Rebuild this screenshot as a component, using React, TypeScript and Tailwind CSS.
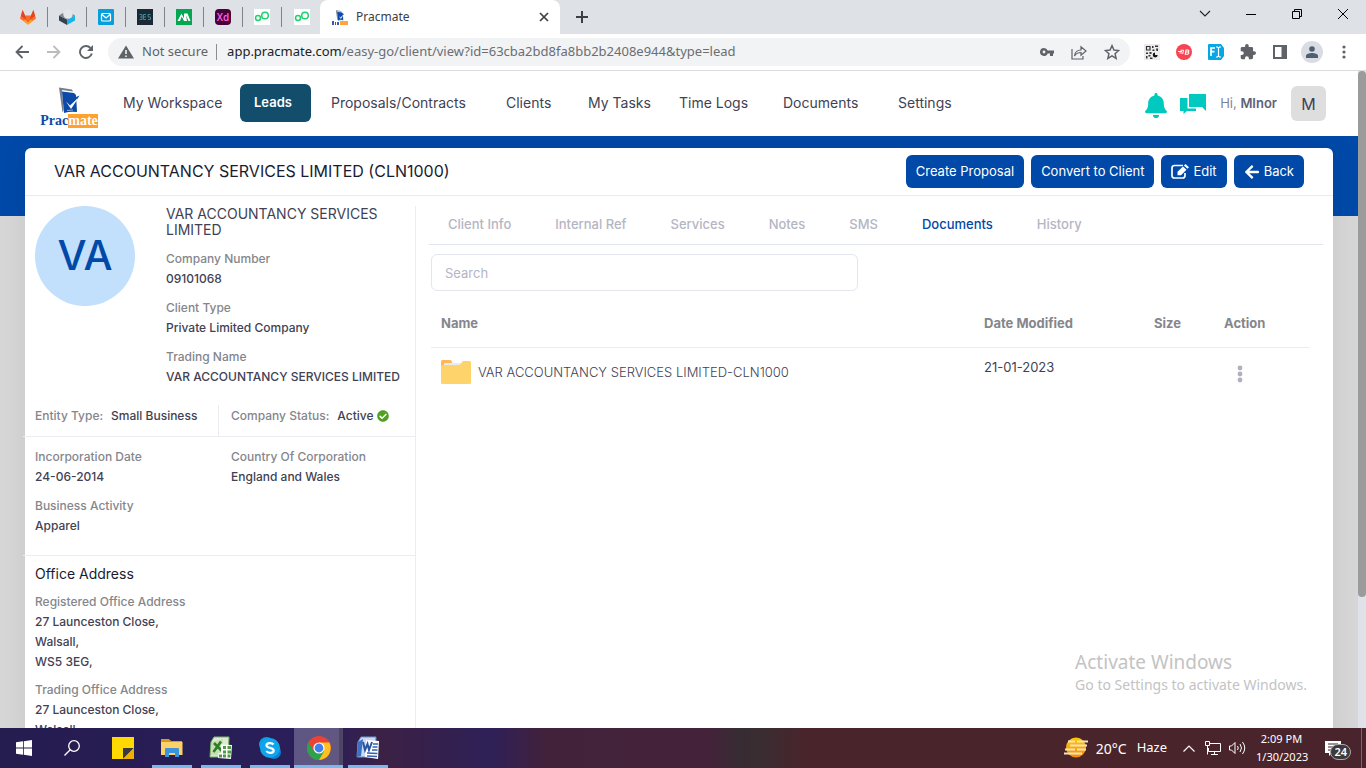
import React from "react";
import { FaBell, FaArrowLeft, FaCheckCircle } from "react-icons/fa";

const navItems = ["My Workspace", "Leads", "Proposals/Contracts", "Clients", "My Tasks", "Time Logs", "Documents", "Settings"];

function PracmateMark({ className }: { className: string }) {
  return (
    <svg viewBox="0 0 24 27" className={className} aria-hidden="true">
      <path d="M2 0.500l13 2 1 2-11-1.500 1.500 20-1 2.500z" fill="#777d8c" />
      <path d="M5 4.500l12 1.500 2 2 1 17q-7-1-13 1z" fill="#0b4aa8" />
      <path d="M9 14.500l4 4 9-8.500-8 12z" fill="#fff" />
      <path d="M18 10.500l4.500-2-2.500 4z" fill="#0b4aa8" />
      <path d="M10 23.500l6-.5" stroke="#8fb0dc" />
    </svg>
  );
}

function TabIcon({ kind }: { kind: string }) {
  switch (kind) {
    case "GitLab":
      return (
        <svg viewBox="0 0 16 16" className="size-4">
          <path d="M0 9.500 2.600 1 5 6.500h6L13.400 1 16 9.500 8 15.500z" fill="#fc6d26" />
          <path d="M2.600 1 5 6.500 8 15.500 11 6.500 13.400 1 15 7 8 12 1 7z" fill="#e2432a" />
          <path d="M3 11.700 8 15.500l5-3.800-2.500-1L8 13l-2.500-2.300z" fill="#fca326" />
        </svg>
      );
    case "Box":
      return (
        <svg viewBox="0 0 16 16" className="size-4">
          <path d="M0 6.500l8 4v5.500l-8-4.500z" fill="#35414c" />
          <path d="M16 6.500l-8 4v5.500l8-4.500z" fill="#17b6ea" />
          <path d="M0 6.500 4 4h8l4 2.500-8 4z" fill="#7c8792" />
          <circle cx="9" cy="5" r="4.800" fill="#e3e7ea" />
        </svg>
      );
    case "Mail":
      return (
        <svg viewBox="0 0 16 16" className="size-4">
          <rect width="16" height="16" rx="1" fill="#069fdb" />
          <rect x="3.500" y="4.500" width="9" height="7.500" rx="1" fill="none" stroke="#fff" strokeWidth="1.200" />
          <path d="M4 5.500l4 3.500 4-3.500" fill="none" stroke="#fff" strokeWidth="1.200" />
        </svg>
      );
    case "Code":
      return (
        <svg viewBox="0 0 16 16" className="size-4">
          <rect width="16" height="16" fill="#1b2836" />
          <path d="M2.500 5.500H5v5H2.500M3 8h2M9 5.500H6.500v5H9M6.500 8H9M13.500 5.500H11V8h2.500v2.500H11" fill="none" stroke="#3e8c8c" />
        </svg>
      );
    case "Monitor":
      return (
        <svg viewBox="0 0 16 16" className="size-4">
          <rect width="16" height="16" fill="#04a651" />
          <path d="M1.500 12 5.500 4.500 8 9.500V4.500h3.500L14.500 12h-2L10 6.500 11 12H8L5.700 7.500 4 12z" fill="#fff" />
        </svg>
      );
    case "Xd":
      return (
        <span className="flex size-4 items-center justify-center rounded-sm bg-[#470137] font-['Open_Sans',sans-serif] text-[10px] font-semibold text-[#ff61f6]">Xd</span>
      );
    default:
      return (
        <svg viewBox="0 0 16 16" className="size-4">
          <rect width="16" height="16" fill="#fff" />
          <circle cx="4" cy="9" r="2.500" fill="none" stroke="#1ed36f" strokeWidth="1.500" />
          <circle cx="11" cy="6.500" r="3.300" fill="none" stroke="#1ed36f" strokeWidth="1.500" />
        </svg>
      );
  }
}

function BrowserChrome() {
  const tabs = ["GitLab", "Box", "Mail", "Code", "Monitor", "Xd", "Upwork", "Upwork inbox"];
  return (
    <div className="shrink-0 font-['Noto_Sans',sans-serif]">
      <div className="flex h-[34px] bg-[#dee1e6]">
        <div className="-mr-px flex pl-[9px]">
          {tabs.map((t, i) => (
            <div key={t} className="flex w-[39px] items-center">
              <button aria-label={t} className="flex flex-1 justify-center"><TabIcon kind={t} /></button>
              {i < tabs.length - 1 && <span className="h-5 w-px bg-[#808488]" />}
            </div>
          ))}
        </div>
        <div className="flex w-60 items-center rounded-t-lg bg-white pr-[7px] pl-3">
          <span className="flex w-4 flex-col items-center">
            <PracmateMark className="h-[11px] w-2.5" />
            <svg viewBox="0 0 16 4" className="h-1 w-4"><path d="M0 0h2v4H0zM3 1h1v3H3zM5 1h2v3H5z" fill="#2d5fae" /><path d="M8 0h8v4H8z" fill="#ffa53a" /></svg>
          </span>
          <span className="ml-2 flex-1 text-[12px] text-[#3c4043]">Pracmate</span>
          <button aria-label="Close tab" className="p-1">
            <svg viewBox="0 0 10 10" className="size-2.5"><path d="M1 1l8 8M9 1L1 9" stroke="#3c4043" strokeWidth="1.700" /></svg>
          </button>
        </div>
        <button aria-label="New tab" className="ml-4 self-center">
          <svg viewBox="0 0 12 12" className="size-3"><path d="M6 0v12M0 6h12" stroke="#3c4043" strokeWidth="2" /></svg>
        </button>
        <div className="ml-auto flex h-7 items-center">
          <button aria-label="Search tabs" className="flex w-[46px] justify-center"><svg viewBox="0 0 12 8" className="h-2 w-3"><path d="M1 1l5 5 5-5" fill="none" stroke="#222" strokeWidth="1.100" /></svg></button>
          <button aria-label="Minimize" className="flex w-[46px] justify-center"><span className="h-px w-2.5 bg-black" /></button>
          <button aria-label="Restore" className="flex w-[46px] justify-center"><svg viewBox="0 0 10 10" className="size-2.5"><path d="M.5 2.500h7v7h-7zM2.500 2.500v-2h7v7h-2" fill="none" stroke="#000" /></svg></button>
          <button aria-label="Close" className="flex w-[46px] justify-center"><svg viewBox="0 0 10 10" className="size-2.5"><path d="M0 0l10 10M10 0L0 10" stroke="#000" /></svg></button>
        </div>
      </div>
      <div className="flex h-[37px] items-center border-b border-[#dadce0] bg-white">
        <div className="flex w-[108px] items-center gap-[18px] pl-[15px]">
          <button aria-label="Back"><svg viewBox="0 0 14 14" className="size-3.5"><path d="M14 7H1.500M7.500 1l-6 6 6 6" fill="none" stroke="#5f6368" strokeWidth="1.800" /></svg></button>
          <button aria-label="Forward"><svg viewBox="0 0 14 14" className="size-3.5"><path d="M0 7h12.500M6.500 1l6 6-6 6" fill="none" stroke="#babcbe" strokeWidth="1.800" /></svg></button>
          <button aria-label="Reload"><svg viewBox="0 0 14 14" className="size-3.5"><path d="M12.800 8.500A6 6 0 1 1 11.500 3" fill="none" stroke="#5f6368" strokeWidth="1.900" /><path d="M14 0v6H8z" fill="#5f6368" /></svg></button>
        </div>
        <div className="flex h-7 flex-1 items-center rounded-full bg-[#f1f3f4] px-2.5">
          <svg viewBox="0 0 16 14" className="h-3.5 w-4"><path d="M8 0.500l8 13H0z" fill="#5f6368" /><path d="M8 5v4M8 10.500v1.500" stroke="#f1f3f4" strokeWidth="1.600" /></svg>
          <span className="ml-2 text-[13px] text-[#5f6368]">Not secure</span>
          <span className="mr-2.5 ml-2 h-4 w-px bg-[#8a8d91]" />
          <span className="flex-1 text-[13px] text-[#6b6e73]"><span className="text-[#202124]">app.pracmate.com</span>/easy-go/client/view?id=63cba2bd8fa8bb2b2408e944&amp;type=lead</span>
          <div className="flex items-center gap-[17px]">
            <button aria-label="Passwords"><svg viewBox="0 0 14 8" className="h-2 w-3.5"><path d="M4 0a4 4 0 1 0 3.700 5.500H10V8h3V5.500h1v-3H7.700A4 4 0 0 0 4 0zm0 2.600a1.400 1.400 0 1 1 0 2.800 1.400 1.400 0 0 1 0-2.800z" fill="#5f6368" /></svg></button>
            <button aria-label="Share"><svg viewBox="0 0 16 15" className="h-[15px] w-4"><path d="M1 4v10h11v-3" fill="none" stroke="#5f6368" strokeWidth="1.200" /><path d="M3.500 11C4 6.500 6.500 5 10 5V1.800l5 4.200-5 4.200V7.500C7 7.500 5 8.500 3.500 11z" fill="none" stroke="#5f6368" strokeWidth="1.200" /></svg></button>
            <button aria-label="Bookmark"><svg viewBox="0 0 24 24" className="size-4"><path d="M12 2.500l2.900 6.600 7.100.7-5.400 4.800 1.600 7L12 17.900l-6.200 3.700 1.600-7L2 9.800l7.100-.7z" fill="none" stroke="#5f6368" strokeWidth="2.200" /></svg></button>
          </div>
        </div>
        <div className="flex items-center gap-4 pr-5 pl-3.5">
          <button aria-label="QR code"><svg viewBox="0 0 16 16" className="size-4"><rect width="16" height="16" fill="#ececec" /><path d="M2.500 2.500h3.500v3.500H2.500z" fill="none" stroke="#333" strokeWidth="1.200" /><path d="M8 2h1.500v2H8zM11 1.500h3V3h-3zM8.500 5.500h2v1.500h-2zM12 4.500h2V7h-1.500zM2 8.500h2V10H2zM5.500 8h2v2h-2zM2 12h1.500v2.500H2zM4.500 11h2v1.500h-2zM6 13.500h2.500V15H6z" fill="#333" /><path d="M11 8.500v2.500h2.700a2.500 2.500 0 1 1-2.700-2.500z" fill="#111" /></svg></button>
          <button aria-label="Recorder"><svg viewBox="0 0 16 16" className="size-4"><circle cx="8" cy="8" r="8" fill="#f54452" /><path d="M2 7.500h4M3.500 9h2.500M4.500 6.200h3l-.8 3.800" stroke="#fff" strokeWidth="1" fill="none" /><path d="M10 6h2c1.300 0 1 1.900 0 2 1.200.2.900 2.200-.5 2.200H9.300zM9.700 8H12" stroke="#fff" strokeWidth="1.100" fill="none" /></svg></button>
          <button aria-label="Font finder"><svg viewBox="0 0 16 16" className="size-4"><path d="M1 0h12l3 4v8l-3 4H1a1 1 0 0 1-1-1V1a1 1 0 0 1 1-1z" fill="#08a6e4" /><path d="M3 12V4h4M3 7.700h3.500" fill="none" stroke="#fff" strokeWidth="1.700" /><path d="M8 3h1.500l1 1 1-1H13M10.500 4v8M8 13h1.500l1-1 1 1H13" fill="none" stroke="#fff" strokeWidth="1.200" /></svg></button>
          <button aria-label="Extensions"><svg viewBox="1 1 22 22" className="size-4"><path d="M20.500 11H19V7a2 2 0 0 0-2-2h-4V3.500a2.500 2.500 0 0 0-5 0V5H4a2 2 0 0 0-2 2v3.800h1.500a2.700 2.700 0 0 1 0 5.400H2V20a2 2 0 0 0 2 2h3.800v-1.500a2.700 2.700 0 0 1 5.400 0V22H17a2 2 0 0 0 2-2v-4h1.500a2.500 2.500 0 0 0 0-5z" fill="#5f6368" /></svg></button>
          <button aria-label="Side panel" className="px-px"><svg viewBox="0 0 14 14" className="size-3.5"><path d="M1 1h12v12H1z" fill="none" stroke="#5f6368" strokeWidth="2" /><path d="M8.500 1H13v12H8.500z" fill="#5f6368" /></svg></button>
          <button aria-label="Profile" className="-mx-[3px] flex size-[22px] items-center justify-center rounded-full bg-[#d9dde3]"><svg viewBox="0 0 12 12" className="size-3"><circle cx="6" cy="3" r="2.800" fill="#4f5f72" /><path d="M0 12V9.800C0 7.800 4 7 6 7s6 .8 6 2.800V12z" fill="#4f5f72" /></svg></button>
          <button aria-label="Menu" className="ml-1.5"><svg viewBox="0 0 4 14" className="h-3.5 w-1"><circle cx="2" cy="2" r="1.600" fill="#5f6368" /><circle cx="2" cy="7" r="1.600" fill="#5f6368" /><circle cx="2" cy="12" r="1.600" fill="#5f6368" /></svg></button>
        </div>
      </div>
    </div>
  );
}

function AppHeader() {
  return (
    <header className="flex h-[65px] items-center bg-white pr-8 pl-[39px]">
      <a href="#home" aria-label="Pracmate" className="flex w-[60px] flex-col items-center pt-2">
        <PracmateMark className="h-[27px] w-6" />
        <span className="flex font-['Liberation_Serif',serif] text-[14px] leading-[14px] font-bold">
          <span className="text-[#0b4aa8]">Prac</span>
          <span className="bg-[#ffa12e] text-white">mate</span>
        </span>
      </a>
      <nav className="mb-0.5 ml-6 grid grid-cols-[117px_91px_175px_82px_91px_104px_115px_auto] items-center text-[14px] text-[#3f4254]">
        {navItems.map((n) => (
          <a
            key={n}
            href={"#" + n.toLowerCase()}
            className={n === "Leads" ? "flex h-[38px] w-[71px] items-center rounded-md bg-[#124d6c] pl-3.5 text-[13px] font-semibold text-white" : ""}
          >
            {n}
          </a>
        ))}
      </nav>
      <div className="ml-auto flex items-center">
        <button aria-label="Notifications" className="pt-1 text-[#00c9bf]"><FaBell className="h-[25px] w-[22px]" /></button>
        <button aria-label="Messages" className="ml-[13px]"><svg viewBox="0 0 26 20" className="h-5 w-[26px]"><path d="M9 0h17v17l-4-4H9z" fill="#00c9bf" /><path d="M0 4h7.500v10.500H16V17H7l-3.500 3v-3H0z" fill="#00c9bf" /></svg></button>
        <span className="ml-3.5 text-[13px] text-[#7e8299]">Hi, <span className="font-semibold text-[#5e6278]">MInor</span></span>
        <button className="ml-3.5 size-[35px] rounded-md bg-[#dedede] text-[16px] text-[#3f4254]">M</button>
      </div>
    </header>
  );
}

function Field({ label, value }: { label: string; value: string }) {
  return (
    <div className="mb-2.5">
      <dt className="leading-5 text-[#85868c]">{label}</dt>
      <dd className="leading-[19px]">{value}</dd>
    </div>
  );
}

const addresses = [
  { title: "Registered Office Address", lines: ["27 Launceston Close,", "Walsall,", "WS5 3EG,"] },
  { title: "Trading Office Address", lines: ["27 Launceston Close,", "Walsall,"] },
];

function ClientPanel() {
  return (
    <aside className="mt-2.5 w-[391px] shrink-0 border-r border-[#ebedf3] text-[12px] font-medium text-[#3f4254]">
      <div className="flex h-[199px] pl-2.5">
        <div className="flex size-[100px] shrink-0 items-center justify-center rounded-full bg-[#c2dffc] text-[41px] font-medium text-[#0049a8]">VA</div>
        <div className="ml-[31px]">
          <h2 className="mb-[11px] pr-2 text-[14px] leading-4 font-normal">VAR ACCOUNTANCY SERVICES LIMITED</h2>
          <dl>
            <Field label="Company Number" value="09101068" />
            <Field label="Client Type" value="Private Limited Company" />
            <Field label="Trading Name" value="VAR ACCOUNTANCY SERVICES LIMITED" />
          </dl>
        </div>
      </div>
      <div className="-ml-0.5 flex h-8 border-b border-[#ebedf3] pl-3">
        <p className="w-[184px] border-r border-[#ebedf3] pt-0.5 leading-[18px]"><span className="mr-2 text-[#85868c]">Entity Type:</span>Small Business</p>
        <p className="flex pt-0.5 pl-3 leading-[18px]"><span className="mr-2 text-[#85868c]">Company Status:</span>Active<FaCheckCircle className="mt-[3px] ml-1 size-3 text-[#50a121]" /></p>
      </div>
      <dl className="-ml-0.5 grid h-[119px] grid-cols-[196px_auto] content-start border-b border-[#ebedf3] pt-2.5 pl-3">
        <Field label="Incorporation Date" value="24-06-2014" />
        <Field label="Country Of Corporation" value="England and Wales" />
        <Field label="Business Activity" value="Apparel" />
      </dl>
      <div className="pl-2.5">
        <h3 className="pt-2 pb-2 text-[14px] leading-5 font-normal text-[#181c32]">Office Address</h3>
        {addresses.map((a) => (
          <div key={a.title} className="mb-2">
            <p className="leading-5 text-[#85868c]">{a.title}</p>
            <address className="leading-5 not-italic">
              {a.lines.map((l) => <div key={l}>{l}</div>)}
            </address>
          </div>
        ))}
      </div>
    </aside>
  );
}

function DocumentsPanel() {
  const tabs = ["Client Info", "Internal Ref", "Services", "Notes", "SMS", "Documents", "History"];
  return (
    <section className="min-w-0 flex-1 pt-2.5 pr-2.5 pl-[13px] text-[13px]">
      <div role="tablist" className="flex h-[39px] gap-11 border-b border-[#e4e6ef] pl-[19px] font-medium text-[#b5b5c3]">
        {tabs.map((t) => (
          <button key={t} role="tab" aria-selected={t === "Documents"} className={t === "Documents" ? "text-[#0049a8]" : ""}>{t}</button>
        ))}
      </div>
      <input aria-label="Search" placeholder="Search" className="mt-[9px] ml-0.5 block h-[37px] w-[427px] rounded-md border border-[#e4e6ef] px-[13px] outline-none placeholder:text-[#b5b5c3]" />
      <div className="mt-2.5 mr-[13px] ml-0.5">
        <table className="w-full table-fixed text-left">
          <thead>
            <tr className="h-[46px] border-b border-[#ebedf3] text-[#85868c]">
              <th className="pl-2.5 font-bold">Name</th>
              <th className="w-[170px] font-bold">Date Modified</th>
              <th className="w-[70px] font-bold">Size</th>
              <th className="w-[86px] font-bold">Action</th>
            </tr>
          </thead>
          <tbody className="font-light text-[#3f4254]">
            <tr className="h-[50px]">
              <td className="pl-2.5">
                <a href="#folder" className="flex items-center gap-[7px]">
                  <svg viewBox="0 0 30 24" className="h-6 w-[30px]"><path d="M0 1.500Q0 0 1.500 0H9q1.500 0 2 1.500V6H0z" fill="#ffb655" /><path d="M3 3h18v6H3z" fill="#e9ebee" /><path d="M0 6l2-1h16q1.500 0 2.200-1.800Q21 1 22.500 1H28.500Q30 1 30 2.500v20q0 1.500-1.500 1.500h-27Q0 24 0 22.500z" fill="#ffd36c" /></svg>
                  VAR ACCOUNTANCY SERVICES LIMITED-CLN1000
                </a>
              </td>
              <td className="pb-2.5 font-normal">21-01-2023</td>
              <td />
              <td className="pt-1 pl-[13px]"><button aria-label="Row actions" className="block"><svg viewBox="0 0 6 18" className="block h-[18px] w-1.5"><circle cx="3" cy="3" r="2.400" fill="#b0b0bc" /><circle cx="3" cy="9" r="2.400" fill="#b0b0bc" /><circle cx="3" cy="15" r="2.400" fill="#b0b0bc" /></svg></button></td>
            </tr>
          </tbody>
        </table>
      </div>
    </section>
  );
}

const actionButton = "flex h-[33px] items-center gap-1 rounded-md bg-[#0049a8] px-2.5 text-[13px] text-white";

function ClientPage() {
  return (
    <main className="min-h-0 flex-1 overflow-hidden bg-[linear-gradient(#0049a8_80px,#d6d6d6_80px)] px-[25px] pt-3">
      <div className="flex min-h-full flex-col rounded-t-md bg-white shadow-[0_0_30px_rgba(0,0,0,0.06)]">
        <div className="flex h-12 items-center justify-between border-b border-[#ebebed] pr-[29px] pl-[29px]">
          <h1 className="pb-0.5 text-[16px] text-[#181c32]">VAR ACCOUNTANCY SERVICES LIMITED (CLN1000)</h1>
          <div className="flex gap-[7px]">
            <button className={actionButton}>Create Proposal</button>
            <button className={actionButton}>Convert to Client</button>
            <button className={actionButton}>
              <svg viewBox="0 0 18 15" className="h-[15px] w-[18px]"><path d="M12 1.500H3.500Q1 1.500 1 4v7.500Q1 14 3.500 14h8q2.500 0 2.500-2.500V9" fill="none" stroke="#fff" strokeWidth="1.700" /><path d="M14.500 0L18 3.200l-1.600 1.600-3.500-3.300zM12 2.400l3.500 3.300-5.500 5.500H6.500V7.800z" fill="#fff" /></svg>
              Edit
            </button>
            <button className={actionButton}><FaArrowLeft className="size-4" />Back</button>
          </div>
        </div>
        <div className="flex flex-1"><ClientPanel /><DocumentsPanel /></div>
      </div>
    </main>
  );
}

function TaskIcon({ name }: { name: string }) {
  switch (name) {
    case "Sticky Notes":
      return <svg viewBox="0 0 22 22" className="size-[22px]"><path d="M0 0h22v22H0z" fill="#ffd900" /><path d="M11 22V11h11z" fill="#3a3a3a" /><path d="M22 11v11H11z" fill="#f0b000" /></svg>;
    case "File Explorer":
      return <svg viewBox="0 0 22 20" className="h-5 w-[22px]"><path d="M0 1h8l2 2h11v6H0z" fill="#d99a16" /><path d="M0 4h21.500v13H0z" fill="#fcd266" /><path d="M4 11q0-1 1-1h12q1 0 1 1v8h-4v-4H8v4H4z" fill="#3b94dc" /></svg>;
    case "Excel":
      return <svg viewBox="0 0 24 24" className="size-6"><path d="M5 1h15l-1 20H1L2 6z" fill="#dcebd2" stroke="#7fb267" /><path d="M3 6l11-3-1 17-11-1z" fill="#c4dfb4" /><path d="M5 7l8 8M12 5.500L4.500 16" stroke="#2f7d26" strokeWidth="2.600" /><path d="M12 8.500l11 .5-1 14-13-1 .5-5h2.500z" fill="#fff" /><path d="M14 10h3v3h-3zM18.500 10h3.500v3h-3.500zM14 14.500h3v3h-3zM18.500 14.500h3.500v3h-3.500zM10 18.500h3v3h-3zM14 18.500h3v3h-3zM18.500 18.500h3v3h-3z" fill="#4f9a45" /></svg>;
    case "Skype":
      return <svg viewBox="0 0 24 24" className="size-6"><circle cx="8.500" cy="8.500" r="7.500" fill="#0a9fe4" /><circle cx="16" cy="16" r="7" fill="#0f7cd0" /><circle cx="12" cy="12" r="10" fill="#10a5ea" /><path d="M15.500 8.500C14 6.500 8.500 6.500 8.500 9.500c0 3 7.200 1.800 7.200 5 0 3-5.700 3-7.400.5" fill="none" stroke="#fff" strokeWidth="2.200" /></svg>;
    case "Chrome":
      return <svg viewBox="0 0 24 24" className="size-6"><circle cx="12" cy="12" r="12" fill="#ea4335" /><path d="M1.600 6A12 12 0 0 0 12 24l5.200-9L12 12 6.800 15z" fill="#2da14c" /><path d="M12 24A12 12 0 0 0 22.400 6.500H12L17.200 15z" fill="#fcc21f" /><circle cx="12" cy="12" r="5.600" fill="#fff" /><circle cx="12" cy="12" r="4.400" fill="#3f7fee" /></svg>;
    default:
      return <svg viewBox="0 0 24 24" className="size-6"><path d="M5 1h15l-1 20H1L2 6z" fill="#c9dbf3" stroke="#6d93cf" /><path d="M2 6l5-3-2 17-4 1z" fill="#3c70c0" /><path d="M10 4l13 1-1 18-13-2z" fill="#fff" /><path d="M7 6l2 8 2.500-6 1.500 6L16 6" fill="none" stroke="#2a56a5" strokeWidth="2" /><path d="M17 8h5M16.500 11h5M16 14h5.500M11 17l10.500.5M11 20l10 .5" stroke="#3263ae" strokeWidth="1.500" /></svg>;
  }
}

function Taskbar() {
  const apps = ["Sticky Notes", "File Explorer", "Excel", "Skype", "Chrome", "Word"];
  return (
    <footer className="flex h-10 shrink-0 items-stretch bg-[linear-gradient(90deg,#251c50_0%,#2a1f5a_24%,#3b2145_28%,#332050_33%,#2f2058_36%,#42213a_40%,#44233a_52%,#372c33_54%,#3a2c31_56%,#4a242b_59%,#4a242c_100%)] font-['Noto_Sans',sans-serif] text-[12px] text-white">
      <button aria-label="Start" className="flex w-12 items-center justify-center"><svg viewBox="0 0 16 16" className="size-4"><path d="M0 2.300L7 1.300v6.300H0zM7.800 1.200L16 0v7.600H7.800zM0 8.400h7v6.300l-7-1zM7.800 8.400H16V16l-8.200-1.200z" fill="#fff" /></svg></button>
      <button aria-label="Search" className="flex w-[50px] items-center justify-center pr-0.5"><svg viewBox="0 0 16 16" className="size-4"><circle cx="10" cy="6" r="5.300" fill="none" stroke="#fff" strokeWidth="1.300" /><path d="M6.200 9.800L.5 15.500" stroke="#fff" strokeWidth="1.300" /></svg></button>
      {apps.map((a) => (
        <button key={a} aria-label={a} className={a === "Chrome" ? "flex w-[49px] flex-col items-center border-r-4 border-black/20 bg-white/25 pl-1" : "flex w-[49px] flex-col items-center"}>
          <span className="flex flex-1 items-center"><TaskIcon name={a} /></span>
          {a !== "Sticky Notes" && <span className={a === "Chrome" ? "-mt-[3px] -mr-1 -ml-1 h-[3px] w-[49px] bg-[#76b9ed]" : "-mt-[3px] h-[3px] w-10 bg-[#76b9ed]"} />}
        </button>
      ))}
      <div className="ml-auto flex items-center">
        <svg viewBox="0 0 24 22" className="h-[22px] w-6"><defs><linearGradient id="sun" x2="0" y2="1"><stop stopColor="#ffcb05" /><stop offset="1" stopColor="#f58a0b" /></linearGradient></defs><circle cx="12" cy="10.500" r="10" fill="url(#sun)" /><path d="M4 4.500h7M13 4.500h11M6 8.500h17M1 12.500h10M13 12.500h9M0 16.500h18" stroke="#f6e3bd" strokeWidth="1.800" /></svg>
        <span className="ml-2 text-[14px]">20°C</span>
        <span className="ml-2.5 text-[13px]">Haze</span>
        <svg viewBox="0 0 12 7" className="ml-4 h-[7px] w-3"><path d="M.5 6.500L6 1l5.500 5.500" fill="none" stroke="#fff" strokeWidth="1.200" /></svg>
        <svg viewBox="0 0 16 14" className="ml-2.5 h-3.5 w-4"><path d="M5 2.500h10.500v8H3.500V7M9.500 10.500v3M6 13.500h7M.5.500h4v4h-4zM2.500 4.500v9" fill="none" stroke="#fff" /></svg>
        <svg viewBox="0 0 17 14" className="ml-2 h-3.5 w-[17px]"><path d="M.5 5h2L6 1.500v11L2.500 9h-2zM8.500 5q1.500 2 0 4M11 3q3 4 0 8M13.500 1q4.500 6 0 12" fill="none" stroke="#fff" /></svg>
        <div className="ml-2.5 w-[51px] text-center text-[11px] leading-[18px] whitespace-nowrap">2:09 PM<br />1/30/2023</div>
        <button aria-label="24 notifications" className="relative ml-[18px] h-6 w-[26px]">
          <svg viewBox="0 0 16 15" className="h-[15px] w-4"><path d="M0 0h16v12H7l-3 3v-3H0z" fill="#fff" /><path d="M3 3h10M3 6h10M3 9h7" stroke="#3a2228" strokeWidth="1.200" /></svg>
          <span className="absolute right-0 bottom-0 rounded-full border border-[#a9a9a9] bg-[#3b3b3d] px-[3px] text-[11px] leading-[14px] font-semibold">24</span>
        </button>
        <span className="ml-2.5 h-full w-px bg-[#7d636b]" />
        <span className="w-1" />
      </div>
    </footer>
  );
}

export default function App() {
  return (
    <div className="relative flex h-screen flex-col overflow-hidden bg-white">
      <BrowserChrome />
      <div className="flex min-h-0 flex-1 font-['Inter',sans-serif]">
        <div className="flex min-w-0 flex-1 flex-col"><AppHeader /><ClientPage /></div>
        <div className="w-2 bg-[#dfe2e9]"><div className="h-4/5 rounded-full bg-[#9b9b9b]" /></div>
      </div>
      <Taskbar />
      <div className="absolute right-[59px] bottom-[73px] font-['Noto_Sans',sans-serif] text-[#c3c3c3]">
        <p className="text-[19px] leading-[26px]">Activate Windows</p>
        <p className="text-[14px] leading-5">Go to Settings to activate Windows.</p>
      </div>
    </div>
  );
}
